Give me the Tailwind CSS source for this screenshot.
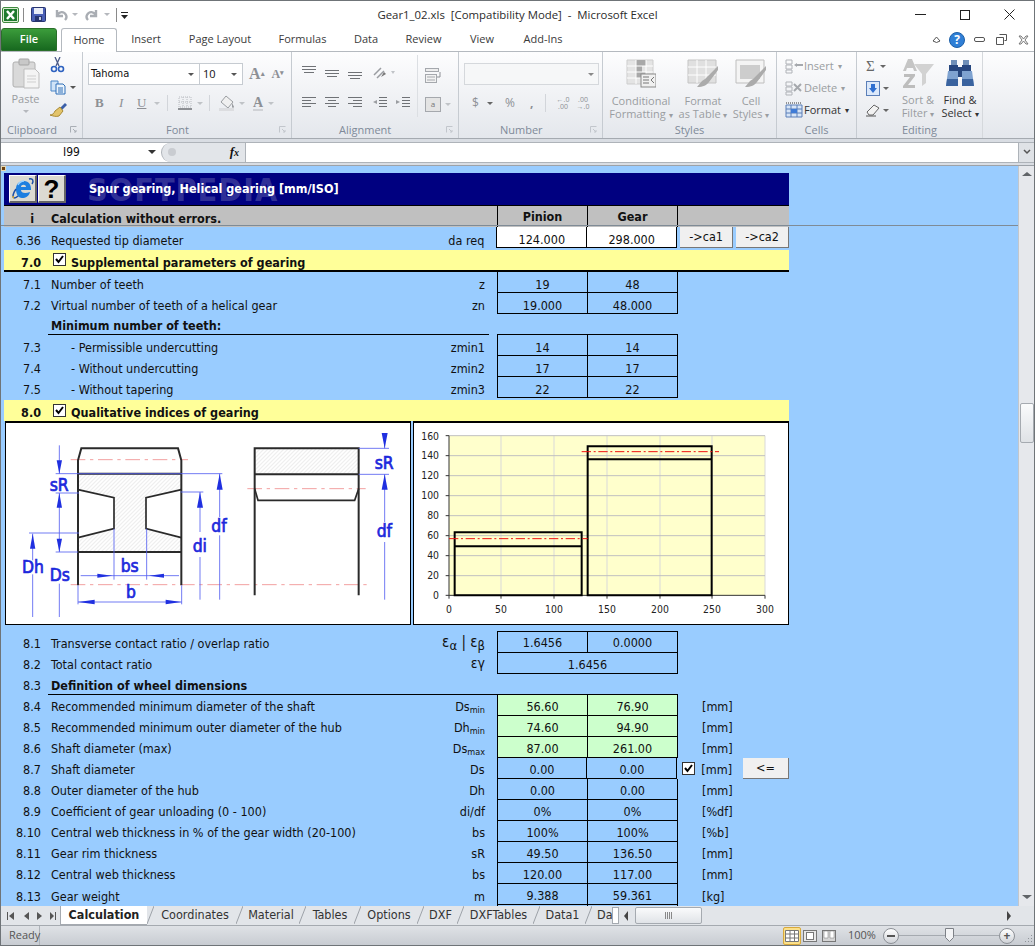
<!DOCTYPE html>
<html lang="en">
<head>
<meta charset="UTF-8">
<title>Gear1_02.xls [Compatibility Mode] - Microsoft Excel</title>
<script src="https://cdn.jsdelivr.net/npm/@tailwindcss/browser@4"></script>
</head>
<body class="bg-white">
<div class="w-[1035px] h-[946px] overflow-hidden flex flex-col border border-[#6f7478] font-['Open_Sans',sans-serif] text-[11px] text-[#3b3b3b]">

  <!-- title bar -->
  <div class="h-[27px] shrink-0 grid grid-cols-[1fr_auto_1fr] items-center bg-white">
    <div class="flex items-center pl-[1px]">
      <svg width="17" height="16" viewBox="0 0 17 16"><rect x="0.5" y="0.5" width="16" height="15" rx="1.5" fill="#d8ecd0" stroke="#3f8a3f"/><rect x="2" y="2" width="13" height="12" fill="#1f7a2f"/><path d="M5 4l7 8M12 4l-7 8" stroke="#fff" stroke-width="2.4"/></svg>
      <div class="w-[1px] h-[14px] bg-[#8a8a8a] ml-[4px]"></div>
      <svg class="ml-[7px]" width="15" height="15" viewBox="0 0 15 15"><rect x="0.5" y="0.5" width="14" height="14" rx="1" fill="#4a5fb5" stroke="#27346f"/><rect x="3" y="1" width="9" height="6" fill="#e8ecf7"/><rect x="4" y="9" width="7" height="5" fill="#27346f"/><rect x="8" y="10" width="2" height="3" fill="#c5cbe0"/></svg>
      <svg class="ml-[8px]" width="14" height="13" viewBox="0 0 14 13"><path d="M3 2v6h6M3 8c2-5 7-5 9-1 1 2 0 4-1 5" fill="none" stroke="#a9adb3" stroke-width="2.4"/></svg>
      <span class="ml-[4px] w-0 h-0 border-x-[3px] border-x-transparent border-t-[3px] border-t-[#b5b8bd]"></span>
      <svg class="ml-[7px]" width="14" height="13" viewBox="0 0 14 13"><path d="M11 2v6H5M11 8C9 3 4 3 2 7c-1 2 0 4 1 5" fill="none" stroke="#a9adb3" stroke-width="2.4"/></svg>
      <span class="ml-[5px] w-0 h-0 border-x-[3px] border-x-transparent border-t-[3px] border-t-[#b5b8bd]"></span>
      <div class="w-[1px] h-[14px] bg-[#8a8a8a] ml-[6px]"></div>
      <svg class="ml-[4px]" width="7" height="8" viewBox="0 0 7 8"><path d="M0 1h7v1H0zM0 4h7L3.5 8z" fill="#222"/></svg>
    </div>
    <div class="text-[11.4px] text-[#2b2b2b] whitespace-pre">Gear1_02.xls  [Compatibility Mode]  -  Microsoft Excel</div>
    <div class="flex justify-end items-center pr-[19px] gap-[34px]">
      <svg width="11" height="11" viewBox="0 0 11 11"><path d="M0 5.5h11" stroke="#222"/></svg>
      <svg width="10" height="10" viewBox="0 0 10 10"><rect x="0.5" y="0.5" width="9" height="9" fill="none" stroke="#222"/></svg>
      <svg width="11" height="11" viewBox="0 0 11 11"><path d="M0.5 0.5l10 10M10.5 0.5l-10 10" stroke="#222"/></svg>
    </div>
  </div>

  <!-- ribbon tabs -->
  <div class="h-[24px] shrink-0 flex items-end bg-white border-b border-[#b4b9bf] relative">
    <div class="w-[56px] h-[23px] flex items-center justify-center rounded-t-[3px] bg-linear-to-b from-[#3b9c3b] to-[#17691f] text-white font-semibold text-[11px] border border-[#2a6f2a]">File</div>
    <div class="w-[56px] h-[24px] ml-[4px] -mb-[1px] flex items-center justify-center rounded-t-[3px] bg-white border border-b-0 border-[#b4b9bf]">Home</div>
    <div class="w-[58px] h-[23px] flex items-center justify-center">Insert</div>
    <div class="w-[90px] h-[23px] flex items-center justify-center">Page Layout</div>
    <div class="w-[75px] h-[23px] flex items-center justify-center">Formulas</div>
    <div class="w-[52px] h-[23px] flex items-center justify-center">Data</div>
    <div class="w-[63px] h-[23px] flex items-center justify-center">Review</div>
    <div class="w-[54px] h-[23px] flex items-center justify-center">View</div>
    <div class="w-[68px] h-[23px] flex items-center justify-center">Add-Ins</div>
    <div class="flex-1 h-[23px] flex items-center justify-end pr-[5px]">
      <svg width="9" height="7" viewBox="0 0 9 7"><path d="M1 5l3.5-4L8 5 4.5 6.5z" fill="none" stroke="#555"/></svg>
      <div class="ml-[8px] w-[16px] h-[16px] rounded-full bg-[#2f7fd6] border border-[#1c5fa8] text-white text-[12px] font-bold flex items-center justify-center">?</div>
      <svg class="ml-[9px]" width="11" height="6" viewBox="0 0 11 6"><rect x="0.5" y="0.5" width="10" height="4" rx="1.5" fill="none" stroke="#555"/></svg>
      <svg class="ml-[11px]" width="11" height="11" viewBox="0 0 11 11"><path d="M3.5 0.5h7v6h-2M0.5 3.5h7v7h-7z" fill="none" stroke="#555"/></svg>
      <svg class="ml-[11px]" width="11" height="10" viewBox="0 0 11 10"><path d="M1 1h2l2.500 3L8 1h2L7 5l3 4H8L5.500 6 3 9H1l3-4z" fill="none" stroke="#777"/></svg>
    </div>
  </div>

  <!-- ribbon body -->
  <div class="h-[86px] shrink-0 flex bg-linear-to-b from-[#fdfdfe] to-[#e4e7ec] text-[#9a9da1]">

    <!-- clipboard -->
    <div class="w-[82px] shrink-0 flex flex-col border-r border-[#c6cbd1]">
      <div class="h-[71px] flex">
        <div class="w-[49px] flex flex-col items-center pt-[6px]">
          <svg width="28" height="31" viewBox="0 0 28 31"><rect x="1" y="4" width="22" height="25" rx="2" fill="#d9d9d9" stroke="#b0b0b0"/><rect x="7" y="1" width="10" height="6" rx="1" fill="#c8c8c8" stroke="#a5a5a5"/><path d="M12 11h11l4 4v15H12z" fill="#f4f4f4" stroke="#bdbdbd"/><path d="M15 18h9M15 21h9M15 24h9" stroke="#cfcfcf"/></svg>
          <span class="mt-[3px] leading-[14px]">Paste</span>
          <span class="mt-[4px] w-0 h-0 border-x-[3px] border-x-transparent border-t-[3px] border-t-[#b5b8bd]"></span>
        </div>
        <div class="flex flex-col pt-[5px] gap-[7px]">
          <svg width="15" height="16" viewBox="0 0 15 16"><path d="M5 0l4 9M10 0L6 9" stroke="#4a5a88" stroke-width="1.300"/><circle cx="4" cy="12" r="2.500" fill="none" stroke="#2e62c0" stroke-width="1.600"/><circle cx="11" cy="12" r="2.500" fill="none" stroke="#2e62c0" stroke-width="1.600"/></svg>
          <div class="flex items-center gap-[4px]">
            <svg width="16" height="15" viewBox="0 0 16 15"><path d="M1 1h7v10H1z" fill="#cfe3f7" stroke="#4d87c7"/><path d="M6 4h7l2 2v8H6z" fill="#eaf3fb" stroke="#2f6fb8"/><path d="M8 8h5M8 10h5M8 12h5" stroke="#2f6fb8"/></svg>
            <span class="w-0 h-0 border-x-[3px] border-x-transparent border-t-[3px] border-t-[#555]"></span>
          </div>
          <svg width="17" height="15" viewBox="0 0 17 15"><path d="M10 6l5-5 2 2-5 5z" fill="#3b5fa8"/><path d="M10 5l3 4-4 5c-3 1-6 0-9-1 3 0 4-2 5-4z" fill="#e3c46a" stroke="#a98a35"/></svg>
        </div>
      </div>
      <div class="flex-1 flex items-center justify-between pl-[6px] pr-[5px] text-[#7f8a99]"><span>Clipboard</span><svg width="7" height="7" viewBox="0 0 7 7"><path d="M0.500 6.500v-6h6M3 3l3 3M6 4v2H4" fill="none" stroke="#a9aeb5"/></svg></div>
    </div>

    <!-- font -->
    <div class="w-[209px] shrink-0 flex flex-col border-r border-[#c6cbd1]">
      <div class="h-[71px] flex flex-col pl-[5px]">
        <div class="flex items-center mt-[11px] h-[22px]">
          <div class="w-[112px] h-full flex items-center justify-between px-[2px] pr-[5px] bg-white border border-[#c6cbd1] text-[#111] font-['DejaVu_Sans_Condensed','DejaVu_Sans',sans-serif]">Tahoma<span class="w-0 h-0 border-x-[3px] border-x-transparent border-t-[3px] border-t-[#555]"></span></div>
          <div class="w-[43px] h-full flex items-center justify-between px-[3px] pr-[5px] bg-white border border-l-0 border-[#c6cbd1] text-[#111]">10<span class="w-0 h-0 border-x-[3px] border-x-transparent border-t-[3px] border-t-[#555]"></span></div>
          <span class="ml-[6px] font-['Liberation_Serif',serif] font-bold text-[16px] text-[#8d9095]">A<sup class="text-[7px]">▴</sup></span>
          <span class="ml-[7px] font-['Liberation_Serif',serif] font-bold text-[12px] text-[#8d9095]">A<sup class="text-[7px]">▾</sup></span>
        </div>
        <div class="flex items-center mt-[6px] h-[24px] text-[#8d9095] font-['Liberation_Serif',serif] text-[13px]">
          <span class="ml-[7px] font-bold w-[14px]">B</span>
          <span class="ml-[10px] italic w-[12px]">I</span>
          <span class="ml-[6px] underline w-[13px]">U</span>
          <span class="ml-[4px] w-0 h-0 border-x-[3px] border-x-transparent border-t-[3px] border-t-[#c0c3c7]"></span>
          <div class="w-[1px] h-[16px] bg-[#d2d5da] ml-[7px]"></div>
          <svg class="ml-[10px]" width="14" height="14" viewBox="0 0 14 14"><path d="M1 1h12v10H1zM5 1v10M9 1v10M1 6h12" fill="none" stroke="#b9bcc1" stroke-dasharray="1 1"/><path d="M0 13h14" stroke="#8d9095" stroke-width="2"/></svg>
          <span class="ml-[5px] w-0 h-0 border-x-[3px] border-x-transparent border-t-[3px] border-t-[#c0c3c7]"></span>
          <div class="w-[1px] h-[16px] bg-[#d2d5da] ml-[6px]"></div>
          <svg class="ml-[9px]" width="16" height="16" viewBox="0 0 16 16"><path d="M7 1l7 6-5 6-7-6z" fill="#f0f0f0" stroke="#9a9da1"/><path d="M13 8c1 2 2 3 2 4s-2 1-2 0 0-2 0-4" fill="#9a9da1"/><rect x="0" y="13" width="15" height="3" fill="#dcdde0"/></svg>
          <span class="ml-[4px] w-0 h-0 border-x-[3px] border-x-transparent border-t-[3px] border-t-[#c0c3c7]"></span>
          <span class="ml-[8px] font-bold text-[14px] border-b-[2px] border-[#d0d2d6] leading-[13px]">A</span>
          <span class="ml-[5px] w-0 h-0 border-x-[3px] border-x-transparent border-t-[3px] border-t-[#c0c3c7]"></span>
        </div>
      </div>
      <div class="flex-1 flex items-center justify-between pl-[83px] pr-[5px] text-[#7f8a99]"><span>Font</span><svg width="7" height="7" viewBox="0 0 7 7"><path d="M0.500 6.500v-6h6M3 3l3 3M6 4v2H4" fill="none" stroke="#c2c6cc"/></svg></div>
    </div>

    <!-- alignment -->
    <div class="w-[167px] shrink-0 flex flex-col border-r border-[#c6cbd1]">
      <div class="h-[71px] flex">
        <div class="flex flex-col pl-[10px] w-[125px]">
          <div class="flex items-start mt-[14px] h-[16px] gap-[9px]">
            <svg width="14" height="12" viewBox="0 0 14 12"><path d="M0 .5h14M0 3.500h14M2 6.500h10" stroke="#6f7276"/></svg>
            <svg class="mt-[3px]" width="14" height="12" viewBox="0 0 14 12"><path d="M0 1.500h14M0 4.500h14M2 7.500h10" stroke="#6f7276"/></svg>
            <svg class="mt-[5px]" width="14" height="12" viewBox="0 0 14 12"><path d="M0 1.500h14M0 4.500h14M2 7.500h10" stroke="#6f7276"/></svg>
            <svg class="ml-[2px]" width="22" height="14" viewBox="0 0 22 14"><path d="M1 9l7-7M4 12l7-7" stroke="#9a9da1" stroke-width="1.500"/><path d="M8 11l5-3-2-2z" fill="#777"/><path d="M18 5l4 0-2 3z" fill="#c0c3c7"/></svg>
          </div>
          <div class="flex items-center mt-[14px] h-[14px] gap-[9px]">
            <svg width="14" height="12" viewBox="0 0 14 12"><path d="M0 .5h14M0 3.500h9M0 6.500h14M0 9.500h9" stroke="#6f7276"/></svg>
            <svg width="14" height="12" viewBox="0 0 14 12"><path d="M0 .5h14M3 3.500h8M0 6.500h14M3 9.500h8" stroke="#6f7276"/></svg>
            <svg width="14" height="12" viewBox="0 0 14 12"><path d="M0 .5h14M5 3.500h9M0 6.500h14M5 9.500h9" stroke="#6f7276"/></svg>
            <svg class="ml-[2px]" width="14" height="12" viewBox="0 0 14 12"><path d="M6 .5h8M6 3.500h8M6 6.500h8M6 9.500h8" stroke="#6f7276"/><path d="M4 3L0 5l4 2z" fill="#9a9da1"/></svg>
            <svg width="14" height="12" viewBox="0 0 14 12"><path d="M6 .5h8M6 3.500h8M6 6.500h8M6 9.500h8" stroke="#6f7276"/><path d="M0 3l4 2-4 2z" fill="#9a9da1"/></svg>
          </div>
        </div>
        <div class="flex flex-col pl-[7px] pt-[13px] border-l border-[#dcdfe3] h-[62px] mt-[3px]">
          <svg width="16" height="15" viewBox="0 0 16 15"><rect x="0.500" y="0.500" width="13" height="3" fill="#eee" stroke="#a5a8ad"/><rect x="0.500" y="6.500" width="11" height="8" fill="#f2f2f2" stroke="#a5a8ad"/><path d="M2 9h8M2 12h8" stroke="#a5a8ad"/><path d="M15 4v5h-3" fill="none" stroke="#8d9095"/></svg>
          <div class="flex items-center mt-[14px] gap-[4px]">
            <div class="w-[16px] h-[15px] border border-[#a5a8ad] bg-[#e4e4e4] text-[8px] leading-[12px] text-center text-[#777]">a</div>
            <span class="w-0 h-0 border-x-[3px] border-x-transparent border-t-[3px] border-t-[#c0c3c7]"></span>
          </div>
        </div>
      </div>
      <div class="flex-1 flex items-center justify-between pl-[47px] pr-[5px] text-[#7f8a99]"><span>Alignment</span><svg width="7" height="7" viewBox="0 0 7 7"><path d="M0.500 6.500v-6h6M3 3l3 3M6 4v2H4" fill="none" stroke="#c2c6cc"/></svg></div>
    </div>

    <!-- number -->
    <div class="w-[144px] shrink-0 flex flex-col border-r border-[#c6cbd1]">
      <div class="h-[71px] flex flex-col pl-[5px]">
        <div class="mt-[11px] w-[135px] h-[22px] flex items-center justify-end pr-[4px] bg-[#f6f7f8] border border-[#d5d8dc]"><span class="w-0 h-0 border-x-[3px] border-x-transparent border-t-[3px] border-t-[#888]"></span></div>
        <div class="flex items-center mt-[7px] h-[22px] text-[#8d9095] text-[12px]">
          <span class="ml-[8px] w-[12px]">$</span>
          <span class="ml-[3px] w-0 h-0 border-x-[3px] border-x-transparent border-t-[3px] border-t-[#666]"></span>
          <span class="ml-[12px] w-[14px]">%</span>
          <span class="ml-[11px] w-[6px] font-bold">,</span>
          <div class="w-[1px] h-[18px] bg-[#d2d5da] ml-[9px]"></div>
          <span class="ml-[9px] text-[7px] leading-[7px] w-[16px] text-center">←.0<br>.00</span>
          <span class="ml-[4px] text-[7px] leading-[7px] w-[16px] text-center">.00<br>→.0</span>
        </div>
      </div>
      <div class="flex-1 flex items-center justify-between pl-[41px] pr-[5px] text-[#7f8a99]"><span>Number</span><svg width="7" height="7" viewBox="0 0 7 7"><path d="M0.500 6.500v-6h6M3 3l3 3M6 4v2H4" fill="none" stroke="#c2c6cc"/></svg></div>
    </div>

    <!-- styles -->
    <div class="w-[174px] shrink-0 flex flex-col border-r border-[#c6cbd1]">
      <div class="h-[71px] flex leading-[13px] text-center">
        <div class="w-[76px] flex flex-col items-center pt-[7px]">
          <svg width="30" height="29" viewBox="0 0 30 29"><path d="M1 1h26v24H1z" fill="#e4e4e4" stroke="#cdcdcd"/><path d="M10 1h10v6h-4v6h4v6h-10z" fill="#a8a8a8"/><path d="M1 7h26M1 13h26M1 19h26M10 1v24M20 1v24" stroke="#fff"/><rect x="15" y="15" width="15" height="13" fill="#f0f0f0" stroke="#8a8a8a"/><path d="M17 18h6M17 21h6M17 24h6M28 18l-3 3 3 3" fill="none" stroke="#777"/></svg>
          <span class="mt-[6px]">Conditional</span>
          <span class="whitespace-nowrap">Formatting <span class="text-[8px]">▾</span></span>
        </div>
        <div class="w-[48px] flex flex-col items-center pt-[7px]">
          <svg class="shrink-0" width="32" height="29" viewBox="0 0 32 29"><path d="M1 1h28v23H1z" fill="#e0e0e0" stroke="#c4c4c4"/><path d="M1 8h28M1 16h28M10 1v23M19 1v23" stroke="#fff"/><path d="M31 7L18 20l-3 2-5 6c6 0 10-2 12-5l9-12z" fill="#ababab"/></svg>
          <span class="mt-[6px]">Format</span>
          <span class="whitespace-nowrap">as Table <span class="text-[8px]">▾</span></span>
        </div>
        <div class="w-[48px] flex flex-col items-center pt-[7px]">
          <svg class="shrink-0" width="32" height="29" viewBox="0 0 32 29"><path d="M1 1h28v23H1z" fill="#f4f4f4" stroke="#bebebe"/><rect x="5" y="6" width="20" height="14" fill="#cdcdcd"/><path d="M31 7L18 20l-3 2-5 6c6 0 10-2 12-5l9-12z" fill="#ababab"/></svg>
          <span class="mt-[6px]">Cell</span>
          <span class="whitespace-nowrap">Styles <span class="text-[8px]">▾</span></span>
        </div>
      </div>
      <div class="flex-1 flex items-center justify-center text-[#7f8a99]">Styles</div>
    </div>

    <!-- cells -->
    <div class="w-[80px] shrink-0 flex flex-col border-r border-[#c6cbd1]">
      <div class="h-[71px] flex flex-col pl-[8px] pt-[5px] gap-[4px]">
        <div class="h-[18px] flex items-center gap-[1px]"><svg width="18" height="15" viewBox="0 0 18 15"><path d="M1 1h6v4H1zM1 6h6v4H1zM1 11h6v3H1z" fill="none" stroke="#b0b3b8"/><path d="M9 6l3-2v4zM12 5h6v2h-6z" fill="#a5a8ad"/></svg><span>Insert</span><span class="text-[8px] ml-[3px]">▾</span></div>
        <div class="h-[18px] flex items-center gap-[1px]"><svg width="18" height="15" viewBox="0 0 18 15"><path d="M1 1h6v4H1zM1 6h6v4H1zM1 11h6v3H1z" fill="none" stroke="#b0b3b8"/><path d="M9 3l7 7M16 3l-7 7" stroke="#a5a8ad" stroke-width="2"/></svg><span>Delete</span><span class="text-[8px] ml-[3px]">▾</span></div>
        <div class="h-[18px] flex items-center gap-[1px] text-[#333]"><svg width="18" height="16" viewBox="0 0 18 16"><path d="M1 3h16v12H1z" fill="#d7e5f7" stroke="#5b7fb8"/><path d="M1 7h16M1 11h16M6 3v12M12 3v12" stroke="#5b7fb8"/><rect x="6" y="7" width="6" height="4" fill="#3f7bd6"/><path d="M1 1h16" stroke="#333" stroke-dasharray="1 1"/></svg><span>Format</span><span class="text-[8px] ml-[3px]">▾</span></div>
      </div>
      <div class="flex-1 flex items-center justify-center text-[#7f8a99]">Cells</div>
    </div>

    <!-- editing -->
    <div class="w-[126px] shrink-0 flex flex-col border-r border-[#d5d8dc]">
      <div class="h-[71px] flex">
        <div class="w-[40px] flex flex-col pl-[9px] pt-[5px] gap-[4px]">
          <div class="h-[18px] flex items-center gap-[5px] font-['Liberation_Serif',serif] text-[15px] text-[#666]">Σ<span class="w-0 h-0 border-x-[3px] border-x-transparent border-t-[3px] border-t-[#666]"></span></div>
          <div class="h-[18px] flex items-center gap-[3px]"><svg width="14" height="15" viewBox="0 0 14 15"><rect x="0.500" y="0.500" width="13" height="14" fill="#dbe8fa" stroke="#5b7fb8"/><path d="M5 3h4v4h2l-4 5-4-5h2z" fill="#2f6fd0"/></svg><span class="w-0 h-0 border-x-[3px] border-x-transparent border-t-[3px] border-t-[#666]"></span></div>
          <div class="h-[18px] flex items-center gap-[3px]"><svg width="14" height="13" viewBox="0 0 14 13"><path d="M1 8l7-7 5 3-6 7H3z" fill="#f2f2f2" stroke="#666"/><path d="M0 12h10" stroke="#555"/></svg><span class="w-0 h-0 border-x-[3px] border-x-transparent border-t-[3px] border-t-[#666]"></span></div>
        </div>
        <div class="w-[42px] flex flex-col items-center pt-[6px] leading-[13px]">
          <svg width="32" height="31" viewBox="0 0 32 31"><path d="M6 1h4l5 12h-3l-1-3H5l-1 3H1z" fill="#c5c5c5"/><path d="M2 16h11v2l-7 9h7v3H1v-2l7-9H2z" fill="#bdbdbd"/><path d="M12 6h20l-8 10v9l-4 3V16z" fill="#d2d2d2"/></svg>
          <span class="mt-[4px]">Sort &amp;</span>
          <span class="whitespace-nowrap">Filter <span class="text-[8px]">▾</span></span>
        </div>
        <div class="w-[42px] flex flex-col items-center pt-[6px] leading-[13px] text-[#333]">
          <svg width="30" height="31" viewBox="0 0 30 31"><path d="M6 2h6v5H6zM18 2h6v5h-6z" fill="#6f8fb8"/><path d="M4 7h9v6H4zM17 7h9v6h-9z" fill="#27477f"/><path d="M3 13h10v15H1zM17 13h10l2 15H17z" fill="#7ea2d0"/><rect x="13" y="9" width="4" height="10" fill="#27477f"/><path d="M2 21h11v7H1zM17 21h11l1 7H17z" fill="#3a639f"/></svg>
          <span class="mt-[4px]">Find &amp;</span>
          <span class="whitespace-nowrap">Select <span class="text-[8px]">▾</span></span>
        </div>
      </div>
      <div class="flex-1 flex items-center justify-center text-[#7f8a99]">Editing</div>
    </div>
    <div class="flex-1"></div>
  </div>

  <!-- formula bar -->
  <div class="h-[28px] shrink-0 flex flex-col justify-center bg-[#d9dde3] border-t border-[#a5aab0] border-b border-b-[#9da2a8]">
    <div class="h-[21px] flex items-stretch text-[#111] bg-white border-y border-[#aeb3b9]">
      <div class="w-[160px] flex items-center justify-between pr-[5px] text-[12px] font-['DejaVu_Sans_Condensed','DejaVu_Sans',sans-serif]"><span class="pl-[62px]">I99</span><span class="w-0 h-0 border-x-[4px] border-x-transparent border-t-[4px] border-t-[#333]"></span></div>
      <div class="w-[85px] flex items-center justify-between bg-[#e2e5e9] border-r border-l border-[#aeb3b9] rounded-l-[10px] pl-[6px] pr-[6px]">
        <span class="w-[8px] h-[8px] rounded-full bg-[#c9ccd1]"></span>
        <span class="font-['Liberation_Serif',serif] italic font-bold text-[13px]">f<span class="text-[10px]">x</span></span>
      </div>
      <div class="flex-1"></div>
      <div class="w-[16px] flex items-center justify-center bg-[#dfe2e6] border-l border-[#aeb3b9]"><svg width="8" height="6" viewBox="0 0 8 6"><path d="M1 1l3 3 3-3" fill="none" stroke="#555" stroke-width="1.500"/></svg></div>
    </div>
  </div>

  <!-- sheet + scrollbar -->
  <div class="h-[740px] shrink-0 flex">
    <div class="relative w-[1017px] overflow-hidden bg-[#99ccff] text-[12.5px] text-[#111] font-['DejaVu_Sans_Condensed','DejaVu_Sans',sans-serif]">
      <div class="absolute left-0 top-0 w-[5px] h-[5px] bg-[#6b3f10] border border-[#e8d9b0]"></div>
      <div class="absolute left-0 top-[59px] w-full h-[1px] bg-[#7f8b96]"></div>

      <div class="w-[785px] ml-[3px] pt-[7px] flex flex-col">
        <!-- title -->
        <div class="relative h-[33px] flex items-center bg-[#000080] border-b border-black">
          <div class="ml-[5px] w-[28px] h-[28px] flex items-center justify-center bg-[#dcdad2] border-t border-l border-white border-r-2 border-b-2 border-r-[#666] border-b-[#666]">
            <svg width="24" height="24" viewBox="0 0 24 24"><path d="M5 12c0-5 3-8 8-8s7 4 7 8v1H10c0 3 4 4 9 2-1 4-4 6-8 6-4 0-6-4-6-9zm5-2h5c0-3-5-3-5 0z" fill="#1d7fe0"/><path d="M7 8c1-2 3-4 6-4" fill="none" stroke="#9fd4ff" stroke-width="1.500"/><path d="M18 2c4-1 5 2 3 5M7 19c-3 3-5 2-5 0 0-2 1-4 3-7" fill="none" stroke="#1c4fa8" stroke-width="1.500"/><path d="M3 21c-1 0-1-1-1-2" fill="none" stroke="#d8a62a" stroke-width="1.500"/></svg>
          </div>
          <div class="ml-[1px] w-[28px] h-[28px] flex items-center justify-center bg-[#dcdad2] border-t border-l border-white border-r-2 border-b-2 border-r-[#666] border-b-[#666] text-black text-[26px] leading-[26px] font-bold font-['Liberation_Sans',sans-serif]">?</div>
          <span class="absolute left-[83px] top-[1px] text-[32px] font-bold text-white/20 tracking-[1px] leading-[32px]">SOFTPEDIA</span>
          <span class="relative ml-[23px] mt-[1px] text-white font-bold">Spur gearing, Helical gearing [mm/ISO]</span>
        </div>
        <!-- status header -->
        <div class="h-[21px] flex items-stretch bg-[#c0c0c0] font-bold">
          <div class="w-[44px] pr-[14px] pt-[4px] text-right">i</div>
          <div class="w-[449px] pl-[3px] pt-[4px]">Calculation without errors.</div>
          <div class="w-[90px] pt-[2px] flex items-center justify-center border-l border-black">Pinion</div>
          <div class="w-[91px] pt-[2px] flex items-center justify-center border-x border-black">Gear</div>
        </div>
        <!-- 6.36 -->
        <div class="h-[21px] flex items-center">
          <div class="w-[44px] pr-[7px] pt-[7px] text-right">6.36</div>
          <div class="w-[449px] pl-[3px] pr-[12px] pt-[7px] flex justify-between"><span>Requested tip diameter</span><span>da req</span></div>
          <div class="w-[90px] h-full pt-[7px] flex items-center justify-center bg-white border-l border-b border-black">124.000</div>
          <div class="w-[91px] h-full pt-[7px] flex items-center justify-center bg-white border-x border-b border-black">298.000</div>
          <div class="w-[53px] h-full ml-[3px] flex items-center justify-center bg-[#f0f0f0] border-r border-b border-[#777]">-&gt;ca1</div>
          <div class="w-[53px] h-full ml-[3px] flex items-center justify-center bg-[#f0f0f0] border-r border-b border-[#777]">-&gt;ca2</div>
        </div>
        <!-- 7.0 -->
        <div class="h-[22px] mt-[2px] pt-[7px] flex items-center bg-[#ffff99] border-b-2 border-black font-bold">
          <div class="w-[44px] pr-[7px] text-right">7.0</div>
          <svg class="ml-[5px] mb-[9px]" width="13" height="13" viewBox="0 0 13 13"><rect x="0.500" y="0.500" width="12" height="12" fill="#fff" stroke="#333"/><path d="M3 6l2.500 3L10 3" fill="none" stroke="#000" stroke-width="2"/></svg>
          <span class="ml-[5px]">Supplemental parameters of gearing</span>
        </div>
        <!-- 7.x -->
        <div class="h-[21px] flex items-center">
          <div class="w-[44px] pr-[7px] pt-[6px] text-right">7.1</div>
          <div class="w-[449px] pl-[3px] pr-[12px] pt-[6px] flex justify-between"><span>Number of teeth</span><span>z</span></div>
          <div class="w-[90px] h-full pt-[6px] flex items-center justify-center border-l border-b border-black">19</div>
          <div class="w-[91px] h-full pt-[6px] flex items-center justify-center border-x border-b border-black">48</div>
        </div>
        <div class="h-[21px] flex items-center">
          <div class="w-[44px] pr-[7px] pt-[6px] text-right">7.2</div>
          <div class="w-[449px] pl-[3px] pr-[12px] pt-[6px] flex justify-between"><span>Virtual number of teeth of a helical gear</span><span>zn</span></div>
          <div class="w-[90px] h-full pt-[6px] flex items-center justify-center border-l border-b border-black">19.000</div>
          <div class="w-[91px] h-full pt-[6px] flex items-center justify-center border-x border-b border-black">48.000</div>
        </div>
        <div class="h-[21px] flex items-center font-bold">
          <div class="w-[44px]"></div>
          <div class="w-[441px] h-full pt-[5px] flex items-center pl-[3px] border-b border-black">Minimum number of teeth:</div>
          <div class="w-[8px]"></div>
          <div class="w-[181px] h-full border-b border-black"></div>
        </div>
        <div class="h-[21px] flex items-center">
          <div class="w-[44px] pr-[7px] pt-[6px] text-right">7.3</div>
          <div class="w-[449px] pl-[23px] pr-[12px] pt-[6px] flex justify-between"><span>- Permissible undercutting</span><span>zmin1</span></div>
          <div class="w-[90px] h-full pt-[6px] flex items-center justify-center border-l border-b border-black">14</div>
          <div class="w-[91px] h-full pt-[6px] flex items-center justify-center border-x border-b border-black">14</div>
        </div>
        <div class="h-[21px] flex items-center">
          <div class="w-[44px] pr-[7px] pt-[6px] text-right">7.4</div>
          <div class="w-[449px] pl-[23px] pr-[12px] pt-[6px] flex justify-between"><span>- Without undercutting</span><span>zmin2</span></div>
          <div class="w-[90px] h-full pt-[6px] flex items-center justify-center border-l border-b border-black">17</div>
          <div class="w-[91px] h-full pt-[6px] flex items-center justify-center border-x border-b border-black">17</div>
        </div>
        <div class="h-[21px] flex items-center">
          <div class="w-[44px] pr-[7px] pt-[6px] text-right">7.5</div>
          <div class="w-[449px] pl-[23px] pr-[12px] pt-[6px] flex justify-between"><span>- Without tapering</span><span>zmin3</span></div>
          <div class="w-[90px] h-full pt-[6px] flex items-center justify-center border-l border-b border-black">22</div>
          <div class="w-[91px] h-full pt-[6px] flex items-center justify-center border-x border-b border-black">22</div>
        </div>
        <!-- 8.0 -->
        <div class="h-[21px] mt-[2px] pt-[6px] flex items-center bg-[#ffff99] font-bold">
          <div class="w-[44px] pr-[7px] text-right">8.0</div>
          <svg class="ml-[5px] mb-[7px]" width="13" height="13" viewBox="0 0 13 13"><rect x="0.500" y="0.500" width="12" height="12" fill="#fff" stroke="#333"/><path d="M3 6l2.500 3L10 3" fill="none" stroke="#000" stroke-width="2"/></svg>
          <span class="ml-[5px]">Qualitative indices of gearing</span>
        </div>
        <!-- pictures -->
        <div class="h-[204px] flex">
          <div class="w-[406px] ml-[1px] bg-white border border-t-2 border-black">
            <svg width="404" height="201" viewBox="16 8 1212 603">
              <defs>
                <pattern id="hatch" width="12" height="12" patternUnits="userSpaceOnUse"><path d="M0 12L12 0" stroke="#d4d4d4" stroke-width="2"/></pattern>
              </defs>
              <path d="M232 160H542V208L436 232V325L542 352V395H232V352L340 325V232L232 208Z" fill="url(#hatch)"/>
              <rect x="762" y="84" width="312" height="76" fill="url(#hatch)"/>
              <g fill="none" stroke="#f2a0a0" stroke-width="3" stroke-dasharray="44 14 10 14">
                <path d="M210 118H562M740 205H1095M210 493H1112"/>
              </g>
              <g fill="none" stroke="#2a2a2a" stroke-width="6">
                <path d="M232 495V120L242 84H532L542 120V495M232 160H542M232 395H542"/>
                <path d="M232 208L340 232V325L232 352M542 208L436 232V325L542 352" stroke-width="5"/>
                <path d="M762 525V84H1074V525M762 162H1074"/>
                <path d="M762 205L772 240H1062L1074 205" stroke-width="5"/>
              </g>
              <g fill="none" stroke="#5560f0" stroke-width="2.500">
                <path d="M165 160H665M165 218H235M85 338H235M165 395H232"/>
                <path d="M176 75V160M176 218V395M176 490V590"/>
                <path d="M96 340V420M96 462V590"/>
                <path d="M240 466H535M340 325V478M438 325V478"/>
                <path d="M232 495V552M543 495V552M232 545H543"/>
                <path d="M540 215H608M598 215V335M598 410V538"/>
                <path d="M657 160V290M657 345V538"/>
                <path d="M1074 84H1165M1074 162H1165M1152 38V84M1152 162V305M1152 365V538"/>
              </g>
              <g fill="#2030e0">
                <path d="M168 120h16l-8 40zM168 262h16l-8-44zM168 355h16l-8 40z"/>
                <path d="M88 385h16l-8-45z"/>
                <path d="M290 460v12l45-6zM490 460v12l-45-6z"/>
                <path d="M282 538v14l-50-7zM495 538v14l47-7z"/>
                <path d="M589 262h18l-9-47zM648 208h18l-9-48z"/>
                <path d="M1143 38h18l-9 46zM1143 208h18l-9-46z"/>
              </g>
              <g fill="#1c28dc" stroke="#1c28dc" stroke-width="2" font-family="'DejaVu Sans Condensed','DejaVu Sans',sans-serif" font-size="52">
                <text x="147" y="213">sR</text>
                <text x="64" y="458">Dh</text>
                <text x="147" y="482">Ds</text>
                <text x="360" y="454">bs</text>
                <text x="376" y="532">b</text>
                <text x="576" y="396">di</text>
                <text x="632" y="336">df</text>
                <text x="1122" y="147">sR</text>
                <text x="1128" y="350">df</text>
              </g>
            </svg>
          </div>
          <div class="w-[376px] ml-[2px] bg-white border border-t-2 border-black">
            <svg width="374" height="201" viewBox="13 8 1122 603" font-family="'DejaVu Sans Condensed','DejaVu Sans',sans-serif" font-size="31" fill="#222">
              <rect x="118" y="46" width="948" height="479" fill="#ffffcc"/>
              <g fill="none" stroke="#d9d9d9" stroke-width="3"><path d="M274 46V525M433 46V525M592 46V525M751 46V525M907 46V525M1066 46V525"/></g>
              <g fill="none" stroke="#c0c0c0" stroke-width="3"><path d="M118 46H1066M118 106H1066M118 166H1066M118 226H1066M118 286H1066M118 346H1066M118 406H1066M118 466H1066"/></g>
              <g fill="none" stroke="#333" stroke-width="3"><path d="M118 46V525H1066M108 46h10M108 106h10M108 166h10M108 226h10M108 286h10M108 346h10M108 406h10M108 466h10M108 525h10M118 525v10M274 525v10M433 525v10M592 525v10M751 525v10M907 525v10M1066 525v10"/></g>
              <g fill="none" stroke="#000" stroke-width="6"><path d="M135 525V336H516V525ZM135 378H516M534 525V78H906V525ZM534 117H906"/></g>
              <g fill="none" stroke="#f01010" stroke-width="3" stroke-dasharray="28 8 6 8"><path d="M118 355H534M516 94H928"/></g>
              <g text-anchor="end">
                <text x="88" y="58">160</text><text x="88" y="117">140</text><text x="88" y="177">120</text><text x="88" y="237">100</text><text x="88" y="297">80</text><text x="88" y="357">60</text><text x="88" y="417">40</text><text x="88" y="477">20</text><text x="88" y="536">0</text>
              </g>
              <g text-anchor="middle">
                <text x="118" y="577">0</text><text x="274" y="577">50</text><text x="433" y="577">100</text><text x="592" y="577">150</text><text x="751" y="577">200</text><text x="907" y="577">250</text><text x="1066" y="577">300</text>
              </g>
            </svg>
          </div>
        </div>
        <!-- 8.x -->
        <div class="h-[7px] flex"><div class="w-[493px]"></div><div class="w-[181px] h-full border-b border-black"></div></div>
        <div class="h-[21px] flex items-center">
          <div class="w-[44px] pr-[7px] pt-[3px] text-right">8.1</div>
          <div class="w-[449px] pl-[3px] pr-[12px] pt-[3px] flex justify-between"><span>Transverse contact ratio / overlap ratio</span><span class="text-[15px] leading-[15px]">ε<sub class="text-[13px]">α</sub> | ε<sub class="text-[13px]">β</sub></span></div>
          <div class="w-[90px] h-full pt-[3px] flex items-center justify-center border-l border-b border-black">1.6456</div>
          <div class="w-[91px] h-full pt-[3px] flex items-center justify-center border-x border-b border-black">0.0000</div>
        </div>
        <div class="h-[21px] flex items-center">
          <div class="w-[44px] pr-[7px] pt-[4px] text-right">8.2</div>
          <div class="w-[449px] pl-[3px] pr-[12px] pt-[4px] flex justify-between"><span>Total contact ratio</span><span class="text-[14px] leading-[15px]">εγ</span></div>
          <div class="w-[181px] h-full pt-[4px] flex items-center justify-center border-x border-b border-black">1.6456</div>
        </div>
        <div class="h-[21px] flex items-center">
          <div class="w-[44px] pr-[7px] pt-[4px] text-right">8.3</div>
          <div class="w-[449px] h-full pt-[5px] flex items-center pl-[3px] font-bold border-b border-black">Definition of wheel dimensions</div>
          <div class="w-[181px] h-full border-b border-black"></div>
        </div>
        <div class="h-[21px] flex items-center">
          <div class="w-[44px] pr-[7px] pt-[4px] text-right">8.4</div>
          <div class="w-[449px] pl-[3px] pr-[12px] pt-[4px] flex justify-between"><span>Recommended minimum diameter of the shaft</span><span>Ds<sub class="text-[9px]">min</sub></span></div>
          <div class="w-[90px] h-full pt-[4px] flex items-center justify-center bg-[#ccffcc] border-l border-b border-black">56.60</div>
          <div class="w-[91px] h-full pt-[4px] flex items-center justify-center bg-[#ccffcc] border-x border-b border-black">76.90</div>
          <div class="pl-[24px] pt-[4px]">[mm]</div>
        </div>
        <div class="h-[21px] flex items-center">
          <div class="w-[44px] pr-[7px] pt-[4px] text-right">8.5</div>
          <div class="w-[449px] pl-[3px] pr-[12px] pt-[4px] flex justify-between"><span>Recommended minimum outer diameter of the hub</span><span>Dh<sub class="text-[9px]">min</sub></span></div>
          <div class="w-[90px] h-full pt-[4px] flex items-center justify-center bg-[#ccffcc] border-l border-b border-black">74.60</div>
          <div class="w-[91px] h-full pt-[4px] flex items-center justify-center bg-[#ccffcc] border-x border-b border-black">94.90</div>
          <div class="pl-[24px] pt-[4px]">[mm]</div>
        </div>
        <div class="h-[21px] flex items-center">
          <div class="w-[44px] pr-[7px] pt-[4px] text-right">8.6</div>
          <div class="w-[449px] pl-[3px] pr-[12px] pt-[4px] flex justify-between"><span>Shaft diameter (max)</span><span>Ds<sub class="text-[9px]">max</sub></span></div>
          <div class="w-[90px] h-full pt-[4px] flex items-center justify-center bg-[#ccffcc] border-l border-b border-black">87.00</div>
          <div class="w-[91px] h-full pt-[4px] flex items-center justify-center bg-[#ccffcc] border-x border-b border-black">261.00</div>
          <div class="pl-[24px] pt-[4px]">[mm]</div>
        </div>
        <div class="h-[21px] flex items-center">
          <div class="w-[44px] pr-[7px] pt-[4px] text-right">8.7</div>
          <div class="w-[449px] pl-[3px] pr-[12px] pt-[4px] flex justify-between"><span>Shaft diameter</span><span>Ds</span></div>
          <div class="w-[90px] h-full pt-[4px] flex items-center justify-center border-l border-b border-black">0.00</div>
          <div class="w-[91px] h-full pt-[4px] flex items-center justify-center border-x border-b border-black">0.00</div>
          <svg class="ml-[5px]" width="13" height="13" viewBox="0 0 13 13"><rect x="0.500" y="0.500" width="12" height="12" fill="#fff" stroke="#333"/><path d="M3 6l2.500 3L10 3" fill="none" stroke="#000" stroke-width="2"/></svg>
          <div class="pl-[6px] pt-[4px]">[mm]</div>
          <div class="w-[46px] h-full ml-[11px] flex items-center justify-center bg-[#f0f0f0] border-r border-b border-[#777]">&lt;=</div>
        </div>
        <div class="h-[21px] flex items-center">
          <div class="w-[44px] pr-[7px] pt-[4px] text-right">8.8</div>
          <div class="w-[449px] pl-[3px] pr-[12px] pt-[4px] flex justify-between"><span>Outer diameter of the hub</span><span>Dh</span></div>
          <div class="w-[90px] h-full pt-[4px] flex items-center justify-center border-l border-b border-black">0.00</div>
          <div class="w-[91px] h-full pt-[4px] flex items-center justify-center border-x border-b border-black">0.00</div>
          <div class="pl-[24px] pt-[4px]">[mm]</div>
        </div>
        <div class="h-[21px] flex items-center">
          <div class="w-[44px] pr-[7px] pt-[4px] text-right">8.9</div>
          <div class="w-[449px] pl-[3px] pr-[12px] pt-[4px] flex justify-between"><span>Coefficient of gear unloading (0 - 100)</span><span>di/df</span></div>
          <div class="w-[90px] h-full pt-[4px] flex items-center justify-center border-l border-b border-black">0%</div>
          <div class="w-[91px] h-full pt-[4px] flex items-center justify-center border-x border-b border-black">0%</div>
          <div class="pl-[24px] pt-[4px]">[%df]</div>
        </div>
        <div class="h-[21px] flex items-center">
          <div class="w-[44px] pr-[7px] pt-[4px] text-right">8.10</div>
          <div class="w-[449px] pl-[3px] pr-[12px] pt-[4px] flex justify-between"><span>Central web thickness in % of the gear width (20-100)</span><span>bs</span></div>
          <div class="w-[90px] h-full pt-[4px] flex items-center justify-center border-l border-b border-black">100%</div>
          <div class="w-[91px] h-full pt-[4px] flex items-center justify-center border-x border-b border-black">100%</div>
          <div class="pl-[24px] pt-[4px]">[%b]</div>
        </div>
        <div class="h-[21px] flex items-center">
          <div class="w-[44px] pr-[7px] pt-[4px] text-right">8.11</div>
          <div class="w-[449px] pl-[3px] pr-[12px] pt-[4px] flex justify-between"><span>Gear rim thickness</span><span>sR</span></div>
          <div class="w-[90px] h-full pt-[4px] flex items-center justify-center border-l border-b border-black">49.50</div>
          <div class="w-[91px] h-full pt-[4px] flex items-center justify-center border-x border-b border-black">136.50</div>
          <div class="pl-[24px] pt-[4px]">[mm]</div>
        </div>
        <div class="h-[21px] flex items-center">
          <div class="w-[44px] pr-[7px] pt-[4px] text-right">8.12</div>
          <div class="w-[449px] pl-[3px] pr-[12px] pt-[4px] flex justify-between"><span>Central web thickness</span><span>bs</span></div>
          <div class="w-[90px] h-full pt-[4px] flex items-center justify-center border-l border-b border-black">120.00</div>
          <div class="w-[91px] h-full pt-[4px] flex items-center justify-center border-x border-b border-black">117.00</div>
          <div class="pl-[24px] pt-[4px]">[mm]</div>
        </div>
        <div class="h-[21px] flex items-center">
          <div class="w-[44px] pr-[7px] pt-[5px] text-right">8.13</div>
          <div class="w-[449px] pl-[3px] pr-[12px] pt-[5px] flex justify-between"><span>Gear weight</span><span>m</span></div>
          <div class="w-[90px] h-full pt-[5px] flex items-center justify-center border-l border-b border-black">9.388</div>
          <div class="w-[91px] h-full pt-[5px] flex items-center justify-center border-x border-b border-black">59.361</div>
          <div class="pl-[24px] pt-[5px]">[kg]</div>
        </div>
        <div class="h-[21px] flex"><div class="w-[493px]"></div><div class="w-[90px] border-l border-black"></div><div class="w-[91px] border-x border-black"></div></div>
      </div>
    </div>
    <!-- vertical scrollbar -->
    <div class="w-[16px] flex flex-col items-center bg-[#e6e8ec] border-l border-[#c2c6cc]">
      <span class="mt-[6px] w-0 h-0 border-x-[5px] border-x-transparent border-b-[4px] border-b-[#606468]"></span>
      <div class="mt-[227px] w-[14px] h-[40px] rounded-[2px] bg-linear-to-b from-[#fafbfc] to-[#dfe2e6] border border-[#a5aab0]"></div>
      <span class="mt-[452px] w-0 h-0 border-x-[5px] border-x-transparent border-t-[4px] border-t-[#606468]"></span>
    </div>
  </div>

  <!-- sheet tabs -->
  <div class="h-[19px] shrink-0 flex items-stretch bg-[#e2e5e9] text-[12.5px] text-[#333] font-['DejaVu_Sans_Condensed','DejaVu_Sans',sans-serif]">
    <div class="w-[60px] flex items-center justify-center border-r border-[#a5aab0]">
      <svg width="50" height="10" viewBox="0 0 50 10" fill="#555"><path d="M1 1h1v8H1zM8 1v8L3 5zM23 1v8l-5-4zM31 1v8l5-4zM44 1v8l4-4zM49 1h1v8h-1z"/></svg>
    </div>
    <div class="w-[86px] flex items-center justify-center bg-white font-bold text-[#222] border-b border-[#a5aab0]">Calculation</div>
    <svg class="shrink-0" width="7" height="19" viewBox="0 0 7 19"><path d="M0 18L7 0" stroke="#9da2a8"/></svg>
    <div class="w-[82px] flex items-center justify-center">Coordinates</div>
    <svg class="shrink-0" width="7" height="19" viewBox="0 0 7 19"><path d="M0 18L7 0" stroke="#9da2a8"/></svg>
    <div class="w-[56px] flex items-center justify-center">Material</div>
    <svg class="shrink-0" width="7" height="19" viewBox="0 0 7 19"><path d="M0 18L7 0" stroke="#9da2a8"/></svg>
    <div class="w-[48px] flex items-center justify-center">Tables</div>
    <svg class="shrink-0" width="7" height="19" viewBox="0 0 7 19"><path d="M0 18L7 0" stroke="#9da2a8"/></svg>
    <div class="w-[56px] flex items-center justify-center">Options</div>
    <svg class="shrink-0" width="7" height="19" viewBox="0 0 7 19"><path d="M0 18L7 0" stroke="#9da2a8"/></svg>
    <div class="w-[33px] flex items-center justify-center">DXF</div>
    <svg class="shrink-0" width="7" height="19" viewBox="0 0 7 19"><path d="M0 18L7 0" stroke="#9da2a8"/></svg>
    <div class="w-[69px] flex items-center justify-center">DXFTables</div>
    <svg class="shrink-0" width="7" height="19" viewBox="0 0 7 19"><path d="M0 18L7 0" stroke="#9da2a8"/></svg>
    <div class="w-[45px] flex items-center justify-center">Data1</div>
    <svg class="shrink-0" width="7" height="19" viewBox="0 0 7 19"><path d="M0 18L7 0" stroke="#9da2a8"/></svg>
    <div class="w-[20px] pl-[5px] flex items-center">Da</div>
    <div class="w-[7px] my-[1px] bg-white border border-[#a5aab0]"></div>
    <div class="w-[14px] flex items-center justify-center"><span class="w-0 h-0 border-y-[5px] border-y-transparent border-r-[4px] border-r-[#444]"></span></div>
    <div class="w-[67px] my-[1px] ml-[2px] rounded-[2px] bg-linear-to-b from-[#fafbfc] to-[#e0e3e7] border border-[#a5aab0] flex items-center justify-center gap-[1px]"><span class="w-[1px] h-[7px] bg-[#888]"></span><span class="w-[1px] h-[7px] bg-[#888]"></span><span class="w-[1px] h-[7px] bg-[#888]"></span><span class="w-[1px] h-[7px] bg-[#888]"></span></div>
    <div class="flex-1 flex items-center justify-end pr-[23px]"><span class="w-0 h-0 border-y-[5px] border-y-transparent border-l-[4px] border-l-[#444]"></span></div>
  </div>

  <!-- status bar -->
  <div class="flex-1 flex items-center bg-linear-to-b from-[#dfe2e6] to-[#c8ccd2] border-t border-[#a5aab0] text-[#555]">
    <div class="w-[39px] h-full flex items-center pl-[8px] border-r border-[#aeb3b9]">Ready</div>
    <div class="flex-1"></div>
    <div class="flex items-center pr-[1px]">
      <div class="w-[18px] h-[18px] flex items-center justify-center rounded-[2px] bg-[#fbe08a] border border-[#d8a93c]"><svg width="14" height="12" viewBox="0 0 14 12"><path d="M.5.5h13v11H.5zM.5 4h13M.5 8h13M5 .5v11M9.500 .5v11" fill="#fff" stroke="#777"/></svg></div>
      <svg class="ml-[2px]" width="14" height="12" viewBox="0 0 14 12"><rect x="0.500" y="0.500" width="13" height="11" fill="#e8e8e8" stroke="#777"/><rect x="3.500" y="2.500" width="7" height="7" fill="#fff" stroke="#777"/></svg>
      <svg class="ml-[5px]" width="14" height="12" viewBox="0 0 14 12"><rect x="0.500" y="0.500" width="13" height="11" fill="#d5d5d5" stroke="#777"/><path d="M2 1h4v7H2zM8 1h4v7H8z" fill="#fff" stroke="#777" stroke-width="0.500"/></svg>
      <span class="ml-[12px] w-[28px]">100%</span>
      <div class="ml-[7px] w-[16px] h-[16px] rounded-full bg-linear-to-b from-white to-[#d0d3d8] border border-[#8c9096] flex items-center justify-center"><span class="w-[8px] h-[2px] bg-[#555]"></span></div>
      <div class="relative w-[100px] h-[1px] bg-[#a5aab0]"><svg class="absolute left-[46px] -top-[7px]" width="9" height="14" viewBox="0 0 9 14"><path d="M.5.5h8v9l-4 4-4-4z" fill="#f2f3f5" stroke="#7d8187"/></svg></div>
      <div class="w-[16px] h-[16px] rounded-full bg-linear-to-b from-white to-[#d0d3d8] border border-[#8c9096] flex items-center justify-center text-[#555] font-bold text-[12px] leading-[12px]">+</div>
      <svg class="ml-[7px] mt-[8px]" width="11" height="11" viewBox="0 0 11 11"><path d="M9 1h1v1H9zM6 4h1v1H6zM9 4h1v1H9zM3 7h1v1H3zM6 7h1v1H6zM9 7h1v1H9z" fill="#8f9399"/></svg>
    </div>
  </div>
</div>
</body>
</html>
